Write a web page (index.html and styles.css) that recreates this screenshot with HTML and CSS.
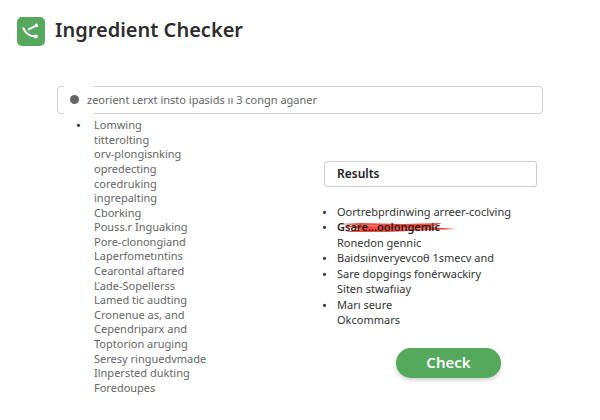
FILE: index.html
```html
<!DOCTYPE html>
<html lang="en">
<head>
<meta charset="utf-8">
<title>Ingredient Checker</title>
<link rel="stylesheet" href="styles.css">
</head>
<body>
<header class="header">
  <svg class="logo" viewBox="0 0 28 29" aria-hidden="true">
    <rect width="28" height="29" rx="5" fill="#54a95c"/>
    <path d="M6.3 11.2C8 15.5 12.5 19.6 18.5 19.4M11.6 12.4L19 8.6" fill="none" stroke="#fff" stroke-width="2" stroke-linecap="round"/>
    <circle cx="19.4" cy="8.4" r="1.8" fill="#fff"/>
    <circle cx="18.8" cy="19.4" r="2" fill="#fff"/>
  </svg>
  <h1 class="title">Ingredient Checker</h1>
</header>
<form class="checker">
  <label class="search">
    <span class="dot"></span>
    <input class="search-input" type="text" aria-label="Ingredients" value="zeorient ʟerxt insto ipasids ıı 3 congn aganer">
  </label>
  <div class="columns">
    <ul class="list ingredients">
      <li class="bullet">Lomwing</li>
      <li>titterolting</li>
      <li>orv-plongisnking</li>
      <li>opredecting</li>
      <li>coredruking</li>
      <li>ingrepalting</li>
      <li>Cborking</li>
      <li>Pouss.r Inguaking</li>
      <li>Pore-clonongiand</li>
      <li>Laperfometıntins</li>
      <li>Cearontal aftared</li>
      <li>Ľade-Sopellerss</li>
      <li>Lamed tic audting</li>
      <li>Cronenue as, and</li>
      <li>Cependriparx and</li>
      <li>Toptorion aruging</li>
      <li>Seresy ringuedvmade</li>
      <li>Ilnpersted dukting</li>
      <li>Foredoupes</li>
    </ul>
    <section class="results">
      <h2 class="results-title">Results</h2>
      <ul class="list findings">
        <li class="bullet">Oortrebprdinwing arreer-coclving</li>
        <li class="bullet"><span class="flagged">Gsare...oolongemic<svg class="scribble" viewBox="0 0 120 14" aria-hidden="true"><path d="M4 4L24 3L66 4L105 3L94 7L119 9L96 10L50 12L8 12L24 9L6 6L26 6Z" fill="#ed4b3f"/><path d="M14 5L42 6M56 9L92 8" stroke="#f58c82" stroke-width="1"/></svg></span></li>
        <li>Ronedon gennic</li>
        <li class="bullet">Baidsıinveryevcoθ 1smecv and</li>
        <li class="bullet">Sare dopgings fonérwackiry</li>
        <li>Siten stwafıiay</li>
        <li class="bullet">Marı seure</li>
        <li>Okcommars</li>
      </ul>
      <button class="check" type="button">Check</button>
    </section>
  </div>
</form>
</body>
</html>
```
FILE: styles.css
```css
* { box-sizing: border-box; }
body {
  margin: 0;
  background: #fff;
  color: #333;
  font-family: "Noto Sans", sans-serif;
  font-size: 11px;
}
.header {
  display: flex;
  align-items: flex-start;
  gap: 10px;
  padding: 17px 17px 0;
}
.logo { width: 28px; height: 29px; }
.title {
  margin: 0;
  font-size: 20px;
  line-height: 26px;
  font-weight: 600;
  color: #2d2d2d;
}
.checker { padding: 40px 57px 0; }
.search {
  position: relative;
  display: flex;
  align-items: center;
  gap: 8px;
  padding: 0 12px 2px;
  height: 28px;
  border: 1px solid #cfcfcf;
  border-radius: 4px;
}
.search::before, .search::after {
  content: "";
  position: absolute;
  left: 6px;
  width: 30px;
  height: 2px;
  background: #fff;
}
.search::before { top: -1px; }
.search::after { bottom: -1px; }
.dot {
  width: 9px;
  height: 9px;
  border-radius: 50%;
  background: #666;
}
.search-input {
  flex: 1;
  padding: 0;
  border: 0;
  outline: 0;
  background: transparent;
  color: #666;
  font: inherit;
}
.columns {
  display: grid;
  grid-template-columns: 246px 1fr;
  padding: 4px 6px 0 19px;
}
.list {
  display: grid;
  grid-auto-rows: 1fr;
  margin: 0;
  padding: 0;
  list-style: none;
  line-height: 14px;
  white-space: nowrap;
}
.list li {
  display: grid;
  grid-template-columns: 18px 1fr;
  align-items: center;
}
.list li::before { content: ""; }
.list .bullet::before {
  content: "•";
  color: #333;
  font-size: 13px;
}
.ingredients { min-height: 277px; color: #666; }
.results { padding-top: 43px; }
.results-title {
  margin: 0 0 0 2px;
  padding: 0 12px;
  border: 1px solid #ccc;
  border-radius: 3px;
  font-size: 12px;
  line-height: 24px;
  font-weight: 600;
  color: #222;
}
.findings { min-height: 124px; margin-top: 17px; }
.findings li { grid-template-columns: 15px 1fr; }
.flagged {
  position: relative;
  z-index: 0;
  justify-self: start;
  font-weight: 600;
  color: #222;
}
.scribble {
  position: absolute;
  z-index: -1;
  left: 0;
  top: 0;
  width: 120px;
  height: 14px;
}
.check {
  display: block;
  margin: 20px 0 0 74px;
  padding: 0 0 2px;
  width: 105px;
  height: 30px;
  border: 0;
  border-radius: 15px;
  background: #54a95c;
  box-shadow: 0 2px 4px #0003;
  color: #fff;
  font: 600 15px "Noto Sans", sans-serif;
}
```
